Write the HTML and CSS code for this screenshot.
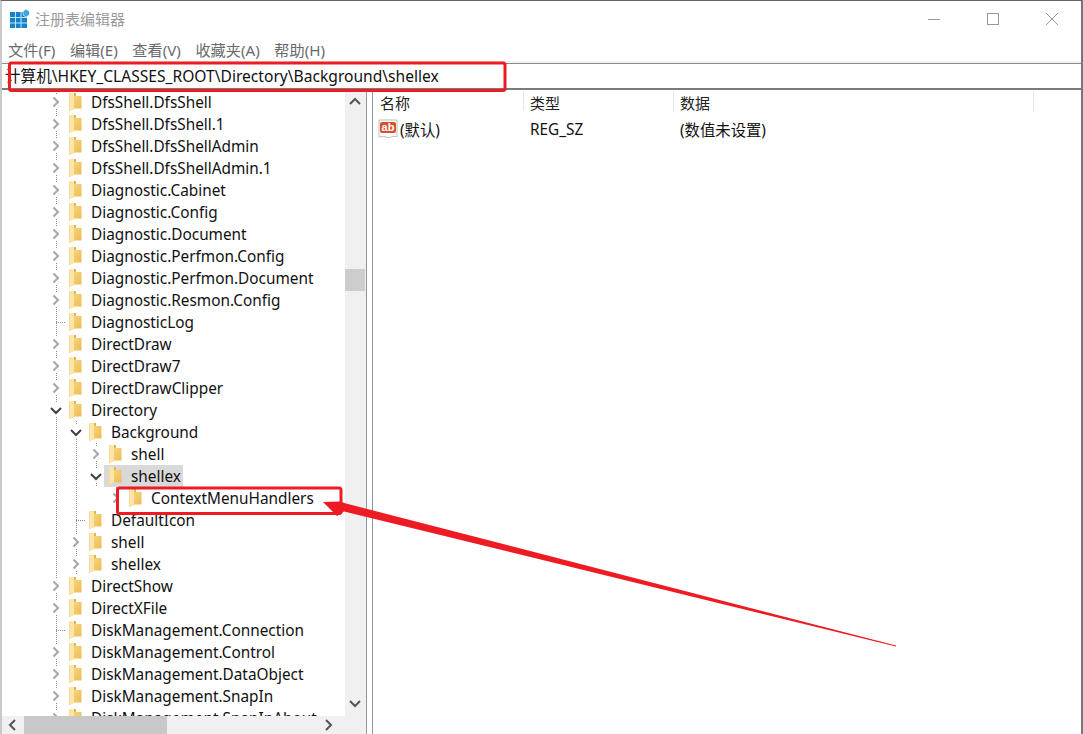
FILE: index.html
```html
<!DOCTYPE html>
<html lang="zh">
<head>
<meta charset="utf-8">
<title>注册表编辑器</title>
<link rel="stylesheet" href="styles.css">
</head>
<body>
<svg class="defs" width="0" height="0">
  <defs>
    <linearGradient id="fg" x1="0" y1="0" x2="1" y2="1">
      <stop offset="0" stop-color="#f9dc8e"/>
      <stop offset="1" stop-color="#ecba4e"/>
    </linearGradient>
    <symbol id="folder" viewBox="0 0 13 18">
      <path d="M0 0H7V3H12.500V15.500H6L0 18Z" fill="url(#fg)"/>
      <path d="M0 0H5V15.500L0 18Z" fill="#fbe5a8"/>
      <path d="M0 0.500V18" stroke="#f3d283" stroke-width="1"/>
      <path d="M5 0H7V3H5Z" fill="#e3b44c"/>
    </symbol>
    <symbol id="chev-r" viewBox="0 0 14 14">
      <path d="M4.500 2.500L9 7L4.500 11.500" fill="none" stroke="#a6a6a6" stroke-width="2"/>
    </symbol>
    <symbol id="chev-d" viewBox="0 0 14 14">
      <path d="M2 5L7 10L12 5" fill="none" stroke="#404040" stroke-width="2"/>
    </symbol>
  </defs>
</svg>
<div class="window">
  <header class="titlebar">
    <svg class="appicon" width="20" height="20" viewBox="0 0 20 20">
      <rect x="0" y="3" width="17" height="16" fill="#1683c9"/>
      <path d="M5.500 3V19M11 3V19M0 8.500H17M0 14H17" stroke="#bfe3f7" stroke-width="1"/>
      <path d="M16 0L19.500 2.500V6L16 8L13 6V2.500Z" fill="#3ba7dd" stroke="#ffffff" stroke-width="0.6"/>
    </svg>
    <span class="title">注册表编辑器</span>
    <div class="winctl">
      <svg width="14" height="14" viewBox="0 0 14 14"><path d="M1 7.500H13" stroke="#999" stroke-width="1"/></svg>
      <svg width="14" height="14" viewBox="0 0 14 14"><rect x="1.500" y="1.500" width="11" height="11" fill="none" stroke="#999" stroke-width="1"/></svg>
      <svg width="14" height="14" viewBox="0 0 14 14"><path d="M1 1L13 13M13 1L1 13" stroke="#999" stroke-width="1"/></svg>
    </div>
  </header>
  <nav class="menubar">
    <span>文件(F)</span><span>编辑(E)</span><span>查看(V)</span><span>收藏夹(A)</span><span>帮助(H)</span>
  </nav>
  <div class="address">计算机\HKEY_CLASSES_ROOT\Directory\Background\shellex</div>
  <main class="main">
    <section class="treepane">
      <div class="treebody">
        <div class="tree">
          <div class="row"><span class="twist"><svg><use href="#chev-r"/></svg></span><svg class="folder"><use href="#folder"/></svg><span class="label">DfsShell.DfsShell</span></div>
          <div class="row"><span class="twist"><svg><use href="#chev-r"/></svg></span><svg class="folder"><use href="#folder"/></svg><span class="label">DfsShell.DfsShell.1</span></div>
          <div class="row"><span class="twist"><svg><use href="#chev-r"/></svg></span><svg class="folder"><use href="#folder"/></svg><span class="label">DfsShell.DfsShellAdmin</span></div>
          <div class="row"><span class="twist"><svg><use href="#chev-r"/></svg></span><svg class="folder"><use href="#folder"/></svg><span class="label">DfsShell.DfsShellAdmin.1</span></div>
          <div class="row"><span class="twist"><svg><use href="#chev-r"/></svg></span><svg class="folder"><use href="#folder"/></svg><span class="label">Diagnostic.Cabinet</span></div>
          <div class="row"><span class="twist"><svg><use href="#chev-r"/></svg></span><svg class="folder"><use href="#folder"/></svg><span class="label">Diagnostic.Config</span></div>
          <div class="row"><span class="twist"><svg><use href="#chev-r"/></svg></span><svg class="folder"><use href="#folder"/></svg><span class="label">Diagnostic.Document</span></div>
          <div class="row"><span class="twist"><svg><use href="#chev-r"/></svg></span><svg class="folder"><use href="#folder"/></svg><span class="label">Diagnostic.Perfmon.Config</span></div>
          <div class="row"><span class="twist"><svg><use href="#chev-r"/></svg></span><svg class="folder"><use href="#folder"/></svg><span class="label">Diagnostic.Perfmon.Document</span></div>
          <div class="row"><span class="twist"><svg><use href="#chev-r"/></svg></span><svg class="folder"><use href="#folder"/></svg><span class="label">Diagnostic.Resmon.Config</span></div>
          <div class="row"><span class="twist leaf"></span><svg class="folder"><use href="#folder"/></svg><span class="label">DiagnosticLog</span></div>
          <div class="row"><span class="twist"><svg><use href="#chev-r"/></svg></span><svg class="folder"><use href="#folder"/></svg><span class="label">DirectDraw</span></div>
          <div class="row"><span class="twist"><svg><use href="#chev-r"/></svg></span><svg class="folder"><use href="#folder"/></svg><span class="label">DirectDraw7</span></div>
          <div class="row"><span class="twist"><svg><use href="#chev-r"/></svg></span><svg class="folder"><use href="#folder"/></svg><span class="label">DirectDrawClipper</span></div>
          <div class="row"><span class="twist"><svg><use href="#chev-d"/></svg></span><svg class="folder"><use href="#folder"/></svg><span class="label">Directory</span></div>
          <div class="row"><span class="guide"></span><span class="twist"><svg><use href="#chev-d"/></svg></span><svg class="folder"><use href="#folder"/></svg><span class="label">Background</span></div>
          <div class="row"><span class="guide"></span><span class="guide"></span><span class="twist"><svg><use href="#chev-r"/></svg></span><svg class="folder"><use href="#folder"/></svg><span class="label">shell</span></div>
          <div class="row"><span class="guide"></span><span class="guide"></span><span class="twist"><svg><use href="#chev-d"/></svg></span><span class="selected"><svg class="folder"><use href="#folder"/></svg><span class="label">shellex</span></span></div>
          <div class="row"><span class="guide"></span><span class="guide"></span><span class="guide blank"></span><span class="twist"><svg><use href="#chev-r"/></svg></span><svg class="folder"><use href="#folder"/></svg><span class="label">ContextMenuHandlers</span></div>
          <div class="row"><span class="guide"></span><span class="twist leaf"></span><svg class="folder"><use href="#folder"/></svg><span class="label">DefaultIcon</span></div>
          <div class="row"><span class="guide"></span><span class="twist"><svg><use href="#chev-r"/></svg></span><svg class="folder"><use href="#folder"/></svg><span class="label">shell</span></div>
          <div class="row"><span class="guide"></span><span class="twist"><svg><use href="#chev-r"/></svg></span><svg class="folder"><use href="#folder"/></svg><span class="label">shellex</span></div>
          <div class="row"><span class="twist"><svg><use href="#chev-r"/></svg></span><svg class="folder"><use href="#folder"/></svg><span class="label">DirectShow</span></div>
          <div class="row"><span class="twist"><svg><use href="#chev-r"/></svg></span><svg class="folder"><use href="#folder"/></svg><span class="label">DirectXFile</span></div>
          <div class="row"><span class="twist leaf"></span><svg class="folder"><use href="#folder"/></svg><span class="label">DiskManagement.Connection</span></div>
          <div class="row"><span class="twist"><svg><use href="#chev-r"/></svg></span><svg class="folder"><use href="#folder"/></svg><span class="label">DiskManagement.Control</span></div>
          <div class="row"><span class="twist"><svg><use href="#chev-r"/></svg></span><svg class="folder"><use href="#folder"/></svg><span class="label">DiskManagement.DataObject</span></div>
          <div class="row"><span class="twist"><svg><use href="#chev-r"/></svg></span><svg class="folder"><use href="#folder"/></svg><span class="label">DiskManagement.SnapIn</span></div>
          <div class="row"><span class="twist"><svg><use href="#chev-r"/></svg></span><svg class="folder"><use href="#folder"/></svg><span class="label">DiskManagement.SnapInAbout</span></div>
        </div>
        <div class="vscroll">
          <svg width="12" height="8" viewBox="0 0 12 8"><path d="M1 7L6 2L11 7" fill="none" stroke="#555" stroke-width="2"/></svg>
          <div class="vtrack"><div class="vthumb"></div></div>
          <svg width="12" height="8" viewBox="0 0 12 8"><path d="M1 1L6 6L11 1" fill="none" stroke="#555" stroke-width="2"/></svg>
        </div>
      </div>
      <div class="hscroll">
        <svg class="harrow" width="8" height="12" viewBox="0 0 8 12"><path d="M7 1L2 6L7 11" fill="none" stroke="#555" stroke-width="2"/></svg>
        <div class="hthumb"></div>
        <svg class="harrow end" width="8" height="12" viewBox="0 0 8 12"><path d="M1 1L6 6L1 11" fill="none" stroke="#555" stroke-width="2"/></svg>
      </div>
    </section>
    <div class="splitter"></div>
    <section class="list">
      <div class="listhead">
        <span class="col c1">名称</span><span class="col c2">类型</span><span class="col c3">数据</span>
      </div>
      <div class="listrow">
        <span class="c1 namecell">
          <svg width="21" height="21" viewBox="0 0 21 21">
            <path d="M1 1H19V18C15 16 12 20 8 18C5 17 3 18 1 18Z" fill="#fff" stroke="#bdbdbd"/>
            <rect x="2" y="3" width="16" height="11" rx="2" fill="#d9512c"/>
            <text x="10" y="12" class="abtext">ab</text>
          </svg>
          <span>(默认)</span>
        </span>
        <span class="c2">REG_SZ</span>
        <span class="c3">(数值未设置)</span>
      </div>
    </section>
  </main>
</div>
<svg class="annot" width="1083" height="734" viewBox="0 0 1083 734">
  <rect x="9.500" y="63" width="495.500" height="27.500" rx="2" class="mark"/>
  <rect x="117.500" y="488" width="223.500" height="25.500" rx="2" class="mark"/>
  <path d="M323 502L340 501.500L346 503.500L896 645.500V646.500L344 511.500L337 516Z" fill="#ed1c24"/>
</svg>
</body>
</html>
```
FILE: styles.css
```css
* { box-sizing: border-box; }
html, body { margin: 0; height: 734px; overflow: hidden; background: #fff; }
body {
  position: relative;
  font-family: "Noto Sans", "Noto Sans CJK SC", sans-serif;
  font-size: 15.35px;
  color: #111;
}
.defs { position: absolute; }
.window {
  height: 734px;
  display: flex;
  flex-direction: column;
  border-top: 1px solid #5f6468;
  border-left: 2px solid #c9c9c9;
  border-right: 2px solid #777;
  background: #fff;
}
.titlebar {
  height: 37px;
  display: flex;
  align-items: center;
  padding: 0 0 1px 8px;
}
.appicon { flex: none; }
.title {
  margin: -2px 0 0 5px;
  font-family: "Noto Sans CJK SC", sans-serif;
  font-size: 15px;
  color: #9a9a9a;
}
.winctl {
  margin-left: auto;
  margin-right: 22px;
  display: flex;
  gap: 45px;
}
.menubar {
  height: 25px;
  display: flex;
  gap: 14.5px;
  align-items: center;
  padding: 0 0 3px 6px;
  font-size: 15.2px;
  color: #6a6a6a;
  background: linear-gradient(#fff 23px, #f2f2f2 23px);
}
.address {
  height: 27px;
  line-height: 24px;
  padding-left: 3px;
  border-top: 1px solid #8a8a8a;
  border-bottom: 2px solid #7a7a7a;
  font-size: 15.6px;
  color: #111;
  white-space: nowrap;
}
.main {
  flex: 1;
  min-height: 0;
  display: flex;
}
.treepane {
  width: 364px;
  flex: none;
  display: flex;
  flex-direction: column;
  min-height: 0;
}
.treebody {
  flex: 1;
  min-height: 0;
  display: flex;
}
.tree {
  flex: 1;
  min-width: 0;
  overflow: hidden;
  padding: 1px 0 0 44px;
}
.row {
  height: 22px;
  display: flex;
  align-items: center;
  white-space: nowrap;
}
.guide, .twist {
  flex: none;
  width: 20px;
  height: 22px;
  background: linear-gradient(#8c8c8c 50%, transparent 50%) 10px 0 / 1px 2px repeat-y;
}
.guide.blank { background: none; }
.twist {
  display: flex;
  align-items: center;
  justify-content: center;
}
.twist svg {
  width: 14px;
  height: 14px;
  background: #fff;
}
.twist.leaf {
  background:
    repeating-linear-gradient(90deg, #8c8c8c 0 1px, transparent 1px 2px) 10px 11px / 10px 1px no-repeat,
    linear-gradient(#8c8c8c 50%, transparent 50%) 10px 0 / 1px 2px repeat-y;
}
.folder {
  flex: none;
  width: 13px;
  height: 18px;
  margin-left: 3px;
}
.label {
  margin: -1px 0 0 9px;
}
.selected {
  display: flex;
  align-items: center;
  height: 22px;
  margin-left: -2px;
  padding: 0 2px;
  background: #d9d9d9;
}
.vscroll {
  width: 21px;
  flex: none;
  display: flex;
  flex-direction: column;
  align-items: center;
  justify-content: space-between;
  padding: 7px 1px 8px 0;
  background: #f0f0f0;
}
.vtrack {
  flex: 1;
  width: 100%;
  padding-top: 164px;
}
.vthumb {
  height: 22px;
  background: #cdcdcd;
}
.hscroll {
  height: 18px;
  flex: none;
  display: flex;
  align-items: center;
  background: #f0f0f0;
  padding-left: 6px;
}
.hthumb {
  width: 143px;
  height: 18px;
  margin-left: 8px;
  background: #c8c8c8;
}
.harrow.end { margin-left: 158px; }
.splitter {
  width: 7px;
  flex: none;
  background: #fff;
  border-left: 1px solid #8f98a0;
  border-right: 1px solid #8f98a0;
}
.list {
  flex: 1;
  min-width: 0;
}
.listhead {
  height: 26px;
  display: flex;
  align-items: flex-start;
  padding-top: 1px;
}
.col {
  height: 20px;
  line-height: 24px;
  padding-left: 6px;
  border-right: 1px solid #e5e5e5;
  font-family: "Noto Sans CJK SC", sans-serif;
  font-size: 15px;
  color: #222;
}
.col.c1 { padding-left: 7px; }
.c1 { width: 151px; flex: none; }
.c2 { width: 150px; flex: none; }
.c3 { width: 360px; flex: none; }
.listrow {
  height: 26px;
  display: flex;
  align-items: center;
}
.listrow .c2, .listrow .c3 { padding-left: 6px; }
.namecell {
  display: flex;
  align-items: center;
  gap: 1px;
  padding-left: 5px;
}
.abtext {
  font-family: "Liberation Sans", sans-serif;
  font-weight: 700;
  font-size: 11px;
  fill: #fff;
  text-anchor: middle;
}
.annot {
  position: absolute;
  left: 0;
  top: 0;
  pointer-events: none;
}
.mark {
  fill: none;
  stroke: #ed1c24;
  stroke-width: 3;
}
```
